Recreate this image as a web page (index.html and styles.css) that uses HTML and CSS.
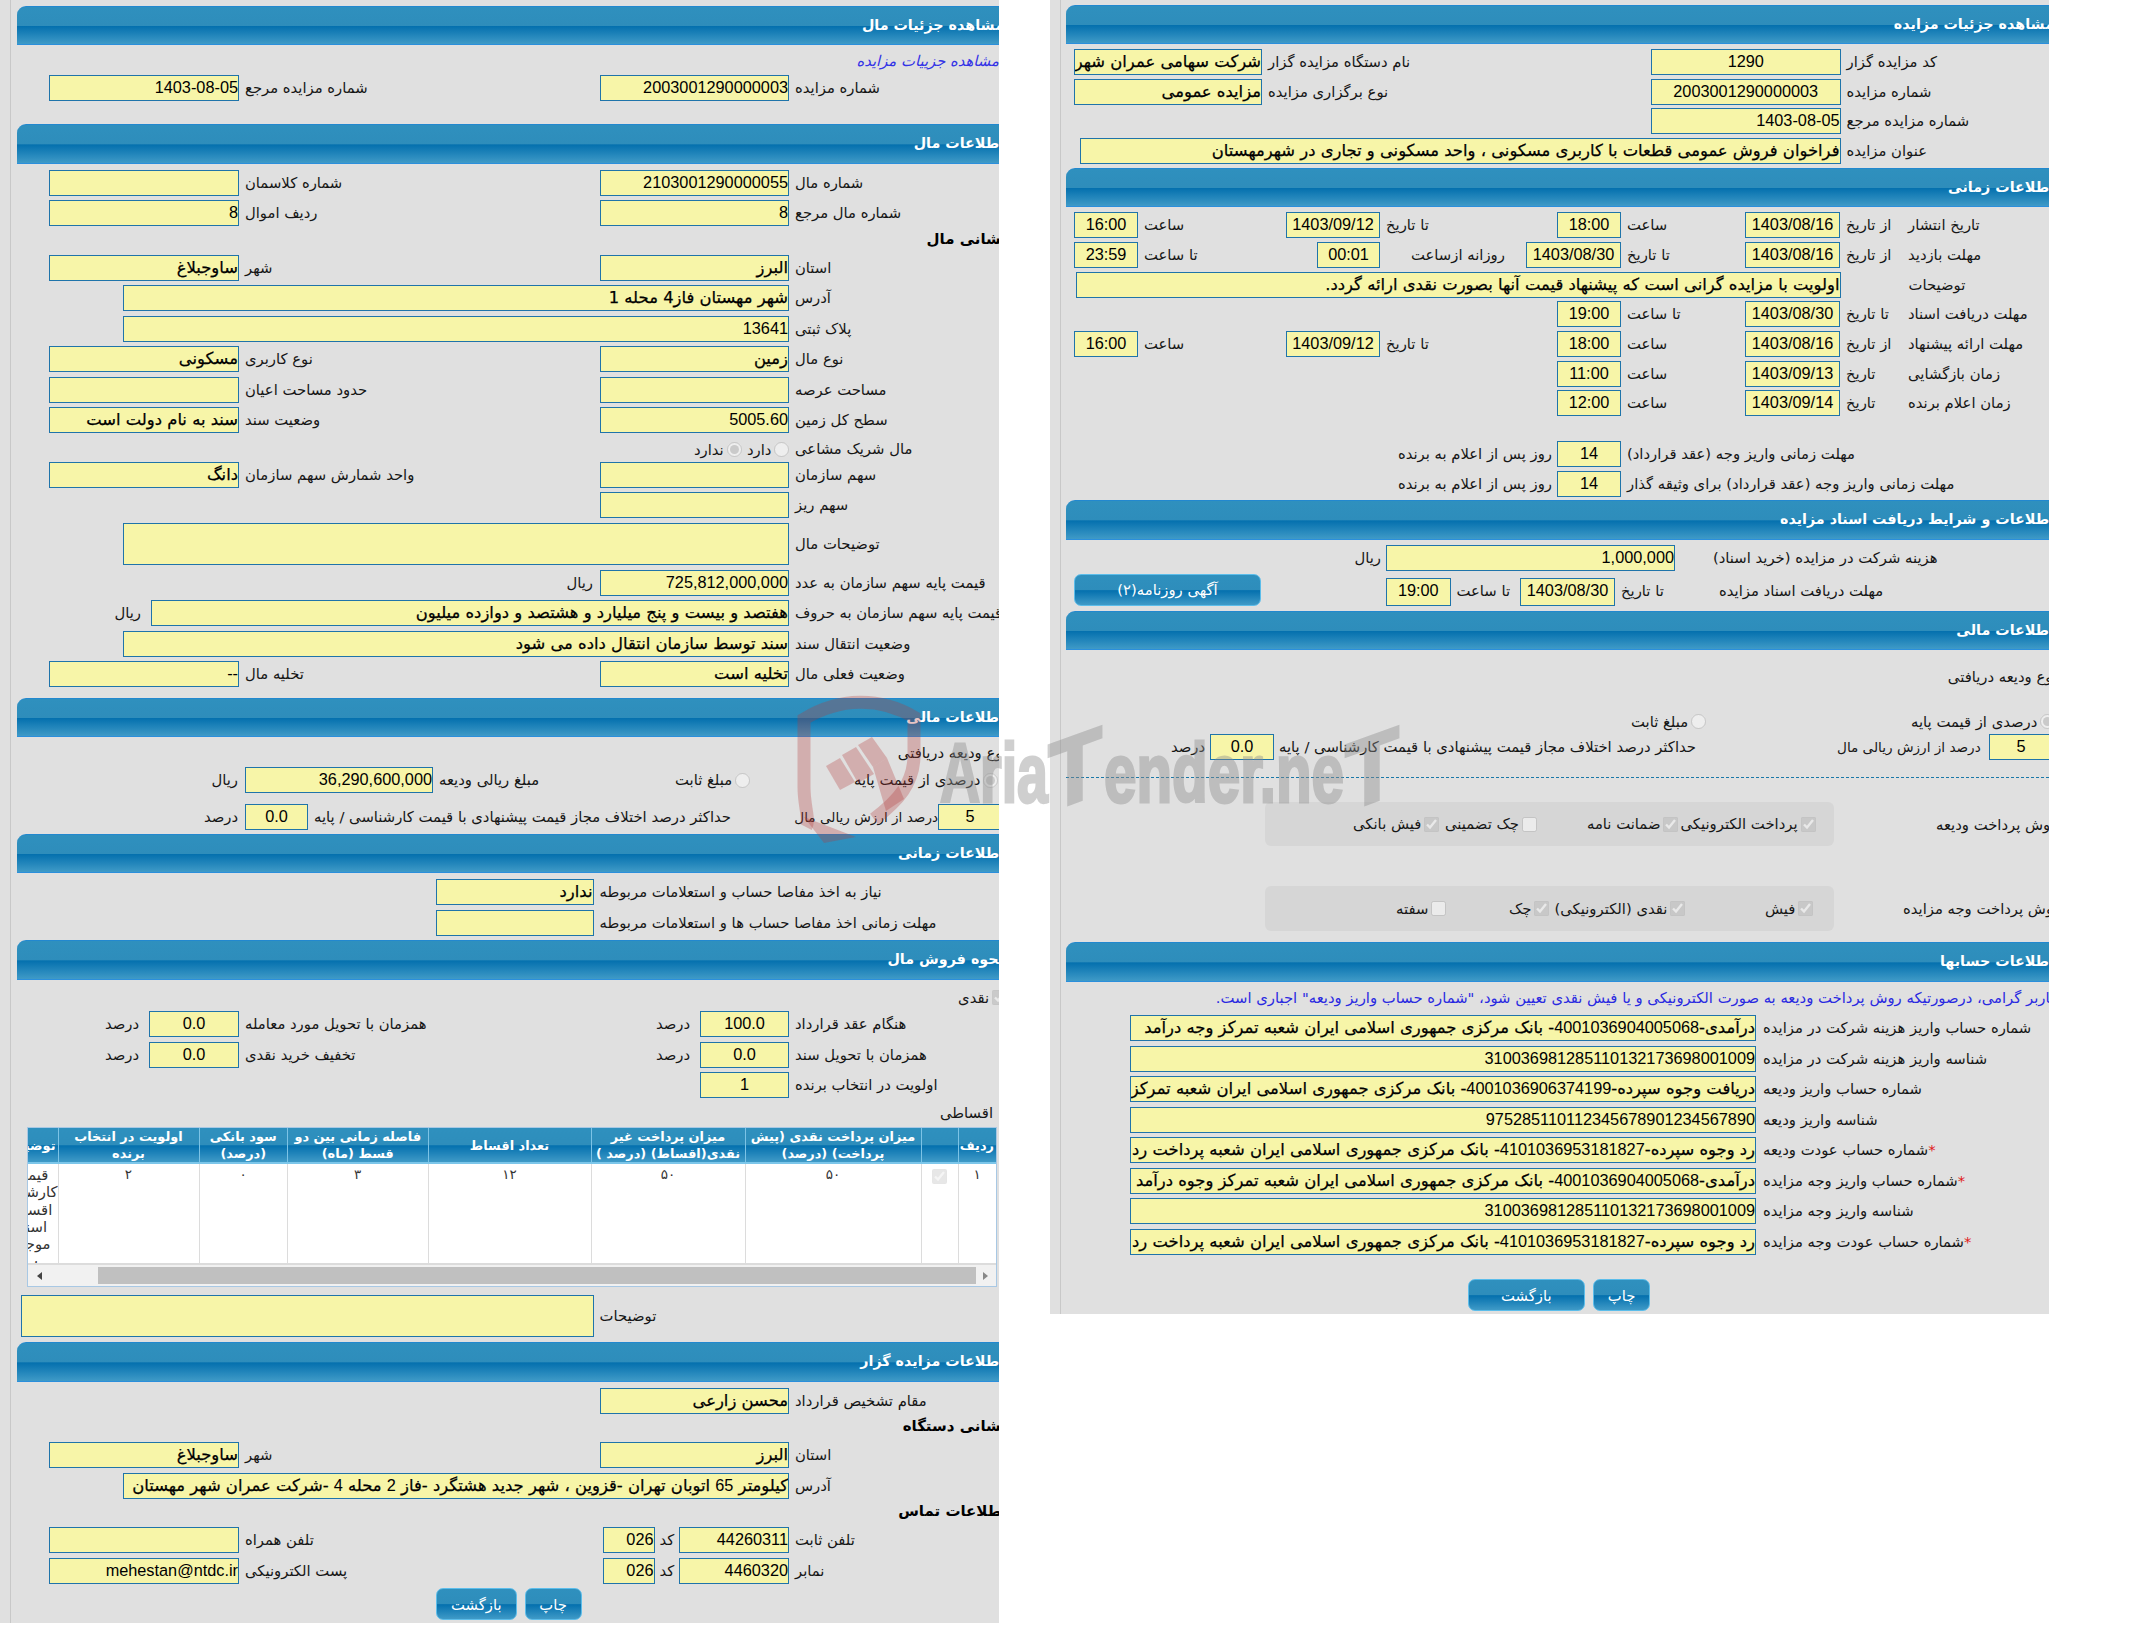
FILE: index.html
```html
<!DOCTYPE html>
<html lang="fa">
<head>
<meta charset="utf-8">
<title>مشاهده جزئیات مزایده</title>
<link rel="stylesheet" href="styles.css">
</head>
<body>
<div class="page">

<section class="panel left">
<div class="inner">
  <h2 class="bar">مشاهده جزئیات مال</h2>
  <div class="tr link">مشاهده جزییات مزایده</div>
  <div class="r a"><div class="in n">1403-08-05</div><div class="lb">شماره مزایده مرجع</div><div class="in n">2003001290000003</div><div class="lb">شماره مزایده</div></div>
  <h2 class="bar m24">اطلاعات مال</h2>
  <div class="r a"><div class="in"></div><div class="lb">شماره کلاسمان</div><div class="in n">2103001290000055</div><div class="lb">شماره مال</div></div>
  <div class="r a"><div class="in n">8</div><div class="lb">ردیف اموال</div><div class="in n">8</div><div class="lb">شماره مال مرجع</div></div>
  <div class="tr sub clip">نشانی مال</div>
  <div class="r a"><div class="in ar">ساوجبلاغ</div><div class="lb">شهر</div><div class="in ar">البرز</div><div class="lb">استان</div></div>
  <div class="r w"><div class="in ar">شهر مهستان فاز4 محله 1</div><div class="lb">آدرس</div></div>
  <div class="r w"><div class="in n">13641</div><div class="lb">پلاک ثبتی</div></div>
  <div class="r a"><div class="in ar">مسکونی</div><div class="lb">نوع کاربری</div><div class="in ar">زمین</div><div class="lb">نوع مال</div></div>
  <div class="r a"><div class="in"></div><div class="lb">حدود مساحت اعیان</div><div class="in"></div><div class="lb">مساحت عرصه</div></div>
  <div class="r a"><div class="in ar">سند به نام دولت است</div><div class="lb">وضعیت سند</div><div class="in n">5005.60</div><div class="lb">سطح کل زمین</div></div>
  <div class="tr shares"><label class="opt">ندارد<input type="radio" name="sh" disabled checked></label><label class="opt">دارد<input type="radio" name="sh" disabled></label><span class="lb">مال شریک مشاعی</span></div>
  <div class="r a"><div class="in ar">دانگ</div><div class="lb">واحد شمارش سهم سازمان</div><div class="in"></div><div class="lb">سهم سازمان</div></div>
  <div class="r a"><div class="c3 in"></div><div class="lb">سهم ریز</div></div>
  <div class="area w"><div class="in"></div><div class="lb">توضیحات مال</div></div>
  <div class="r p"><div class="unit">ریال</div><div class="in n">725,812,000,000</div><div class="lb">قیمت پایه سهم سازمان به عدد</div></div>
  <div class="r l"><div class="unit">ریال</div><div class="in ar">هفتصد و بیست و پنج میلیارد و هشتصد و دوازده میلیون</div><div class="lb">قیمت پایه سهم سازمان به حروف</div></div>
  <div class="r w"><div class="in ar">سند توسط سازمان انتقال داده می شود</div><div class="lb">وضعیت انتقال سند</div></div>
  <div class="r a"><div class="in n">--</div><div class="lb">تخلیه مال</div><div class="in ar">تخلیه است</div><div class="lb">وضعیت فعلی مال</div></div>
  <h2 class="bar m12">اطلاعات مالی</h2>
  <div class="tr rt clip">نوع ودیعه دریافتی</div>
  <div class="r f1"><div class="unit">ریال</div><div class="in n">36,290,600,000</div><div class="lb">مبلغ ریالی ودیعه</div><label class="opt">مبلغ ثابت<input type="radio" name="a1" disabled></label><label class="opt">درصدی از قیمت پایه<input type="radio" name="a1" disabled checked></label></div>
  <div class="r f2"><div class="unit">درصد</div><div class="in n ct">0.0</div><div class="lb">حداکثر درصد اختلاف مجاز قیمت پیشنهادی با قیمت کارشناسی / پایه</div><div class="lb tight">درصد از ارزش ریالی مال</div><div class="in n ct">5</div></div>
  <h2 class="bar m0">اطلاعات زمانی</h2>
  <div class="r t"><div class="in ar">ندارد</div><div class="lb">نیاز به اخذ مفاصا حساب و استعلامات مربوطه</div></div>
  <div class="r t"><div class="in"></div><div class="lb">مهلت زمانی اخذ مفاصا حساب ها و استعلامات مربوطه</div></div>
  <h2 class="bar m0">نحوه فروش مال</h2>
  <div class="tr rt check clip"><label class="opt">نقدی<input type="checkbox" disabled checked></label></div>
  <div class="r c"><div class="unit">درصد</div><div class="in n ct">0.0</div><div class="lb">همزمان با تحویل مورد معامله</div><div class="unit">درصد</div><div class="in n ct">100.0</div><div class="lb">هنگام عقد قرارداد</div></div>
  <div class="r c"><div class="unit">درصد</div><div class="in n ct">0.0</div><div class="lb">تخفیف خرید نقدی</div><div class="unit">درصد</div><div class="in n ct">0.0</div><div class="lb">همزمان با تحویل سند</div></div>
  <div class="r c"><div class="c5 in n ct">1</div><div class="lb">اولویت در انتخاب برنده</div></div>
  <div class="tr rt install">اقساطی</div>
  <div class="tablewrap">
    <div class="tablearea">
    <table>
      <thead><tr><th class="c1">ردیف</th><th class="c2"></th><th class="c3w">میزان پرداخت نقدی (پیش پرداخت) (درصد)</th><th class="c4">میزان پرداخت غیر نقدی(اقساط) (درصد )</th><th class="c5w">تعداد اقساط</th><th class="c6">فاصله زمانی بین دو قسط (ماه)</th><th class="c7">سود بانکی (درصد)</th><th class="c8">اولویت در انتخاب برنده</th><th class="c9">توضیحات</th></tr></thead>
      <tbody><tr><td>۱</td><td><input type="checkbox" disabled checked></td><td>۵۰</td><td>۵۰</td><td>۱۲</td><td>۳</td><td>۰</td><td>۲</td><td class="note">قیمت کارشناسی اقساط اسناد موجود ب</td></tr></tbody>
    </table>
    </div>
    <div class="hscroll"><span class="arr lt"></span><span class="thumb"></span><span class="arr rg"></span></div>
  </div>
  <div class="area d"><div class="in"></div><div class="lb">توضیحات</div></div>
  <h2 class="bar m0">اطلاعات مزایده گزار</h2>
  <div class="r a"><div class="c3 in ar">محسن زارعی</div><div class="lb">مقام تشخیص قرارداد</div></div>
  <div class="tr sub clip">نشانی دستگاه</div>
  <div class="r a"><div class="in ar">ساوجبلاغ</div><div class="lb">شهر</div><div class="in ar">البرز</div><div class="lb">استان</div></div>
  <div class="r w"><div class="in ar">کیلومتر <span class="n">65</span> اتوبان تهران -قزوین ، شهر جدید هشتگرد -فاز <span class="n">2</span> محله <span class="n">4</span> -شرکت عمران شهر مهستان</div><div class="lb">آدرس</div></div>
  <div class="tr sub clip">اطلاعات تماس</div>
  <div class="r ph"><div class="in"></div><div class="lb">تلفن همراه</div><div class="in n">026</div><div class="lb code">کد</div><div class="in n">44260311</div><div class="lb">تلفن ثابت</div></div>
  <div class="r ph"><div class="in n">mehestan@ntdc.ir</div><div class="lb">پست الکترونیکی</div><div class="in n">026</div><div class="lb code">کد</div><div class="in n">4460320</div><div class="lb">نمابر</div></div>
  <div class="btns lbtns"><button class="btn back">بازگشت</button><button class="btn print">چاپ</button></div>
</div>
</section>

<section class="panel right">
<div class="inner">
  <h2 class="bar">مشاهده جزئیات مزایده</h2>
  <div class="r a2"><div class="in ar">شرکت سهامی عمران شهر مهستان</div><div class="lb">نام دستگاه مزایده گزار</div><div class="in n ct">1290</div><div class="lb">کد مزایده گزار</div></div>
  <div class="r a2"><div class="in ar">مزایده عمومی</div><div class="lb">نوع برگزاری مزایده</div><div class="in n ct">2003001290000003</div><div class="lb">شماره مزایده</div></div>
  <div class="r a2"><div class="c3 in n">1403-08-05</div><div class="lb">شماره مزایده مرجع</div></div>
  <div class="r tt"><div class="in ar">فراخوان فروش عمومی قطعات با کاربری مسکونی ، واحد مسکونی و تجاری در شهرمهستان</div><div class="lb">عنوان مزایده</div></div>
  <h2 class="bar m0">اطلاعات زمانی</h2>
  <div class="r t1"><div class="in n ct">16:00</div><div class="lb">ساعت</div><div class="in n ct">1403/09/12</div><div class="lb">تا تاریخ</div><div class="in n ct">18:00</div><div class="lb">ساعت</div><div class="in n ct">1403/08/16</div><div class="lb">از تاریخ</div><div class="lb">تاریخ انتشار</div></div>
  <div class="r t2"><div class="in n ct">23:59</div><div class="lb">تا ساعت</div><div class="in n ct">00:01</div><div class="lb far">روزانه ازساعت</div><div class="in n ct">1403/08/30</div><div class="lb">تا تاریخ</div><div class="in n ct">1403/08/16</div><div class="lb">از تاریخ</div><div class="lb">مهلت بازدید</div></div>
  <div class="r t3"><div class="in ar">اولویت با مزایده گرانی است که پیشنهاد قیمت آنها بصورت نقدی ارائه گردد.</div><div class="lb c3">توضیحات</div></div>
  <div class="r t1"><div class="c5 in n ct">19:00</div><div class="lb">تا ساعت</div><div class="in n ct">1403/08/30</div><div class="lb">تا تاریخ</div><div class="lb">مهلت دریافت اسناد</div></div>
  <div class="r t1"><div class="in n ct">16:00</div><div class="lb">ساعت</div><div class="in n ct">1403/09/12</div><div class="lb">تا تاریخ</div><div class="in n ct">18:00</div><div class="lb">ساعت</div><div class="in n ct">1403/08/16</div><div class="lb">از تاریخ</div><div class="lb">مهلت ارائه پیشنهاد</div></div>
  <div class="r t1"><div class="c5 in n ct">11:00</div><div class="lb">ساعت</div><div class="in n ct">1403/09/13</div><div class="lb">تاریخ</div><div class="lb">زمان بازگشایی</div></div>
  <div class="r t1"><div class="c5 in n ct">12:00</div><div class="lb">ساعت</div><div class="in n ct">1403/09/14</div><div class="lb">تاریخ</div><div class="lb">زمان اعلام برنده</div></div>
  <div class="r dl first"><div class="unit">روز پس از اعلام به برنده</div><div class="in n ct">14</div><div class="lb">مهلت زمانی واریز وجه (عقد قرارداد)</div></div>
  <div class="r dl"><div class="unit">روز پس از اعلام به برنده</div><div class="in n ct">14</div><div class="lb">مهلت زمانی واریز وجه (عقد قرارداد) برای وثیقه گذار</div></div>
  <h2 class="bar m0">اطلاعات و شرایط دریافت اسناد مزایده</h2>
  <div class="r cost"><div class="unit">ریال</div><div class="in n">1,000,000</div><div class="lb">هزینه شرکت در مزایده (خرید اسناد)</div></div>
  <div class="r doc"><button class="btn news">آگهی روزنامه(۲)</button><div class="in n ct c3">19:00</div><div class="lb">تا ساعت</div><div class="in n ct">1403/08/30</div><div class="lb">تا تاریخ</div><div class="lb">مهلت دریافت اسناد مزایده</div></div>
  <h2 class="bar m0">اطلاعات مالی</h2>
  <div class="tr rt clip kind">نوع ودیعه دریافتی</div>
  <div class="r radios"><label class="opt c2">مبلغ ثابت<input type="radio" name="a2" disabled></label><label class="opt">درصدی از قیمت پایه<input type="radio" name="a2" disabled checked></label></div>
  <div class="r f3"><div class="unit">درصد</div><div class="in n ct">0.0</div><div class="lb">حداکثر درصد اختلاف مجاز قیمت پیشنهادی با قیمت کارشناسی / پایه</div><div class="lb tight">درصد از ارزش ریالی مال</div><div class="in n ct">5</div></div>
  <div class="dots"></div>
  <div class="method m-a">
    <div class="box box1">
      <label class="opt">فیش بانکی<input type="checkbox" disabled checked></label>
      <label class="opt">چک تضمینی<input type="checkbox" disabled></label>
      <label class="opt">ضمانت نامه<input type="checkbox" disabled checked></label>
      <label class="opt">پرداخت الکترونیکی<input type="checkbox" disabled checked></label>
    </div>
    <div class="mname">روش پرداخت ودیعه</div>
  </div>
  <div class="method m-b">
    <div class="box box2">
      <label class="opt">سفته<input type="checkbox" disabled></label>
      <label class="opt">چک<input type="checkbox" disabled checked></label>
      <label class="opt">نقدی (الکترونیکی)<input type="checkbox" disabled checked></label>
      <label class="opt">فیش<input type="checkbox" disabled checked></label>
    </div>
    <div class="mname">روش پرداخت وجه مزایده</div>
  </div>
  <h2 class="bar m11">اطلاعات حسابها</h2>
  <div class="tr note-blue clip">کاربر گرامی، درصورتیکه روش پرداخت ودیعه به صورت الکترونیکی و یا فیش نقدی تعیین شود، "شماره حساب واریز ودیعه" اجباری است.</div>
  <div class="r acc"><div class="in ar">درآمدی-<span class="n">4001036904005068</span>- بانک مرکزی جمهوری اسلامی ایران شعبه تمرکز وجه درآمد</div><div class="lb">شماره حساب واریز هزینه شرکت در مزایده</div></div>
  <div class="r acc"><div class="in n">310036981285110132173698001009</div><div class="lb">شناسه واریز هزینه شرکت در مزایده</div></div>
  <div class="r acc"><div class="in ar">دریافت وجوه سپرده-<span class="n">4001036906374199</span>- بانک مرکزی جمهوری اسلامی ایران شعبه تمرکز</div><div class="lb">شماره حساب واریز ودیعه</div></div>
  <div class="r acc"><div class="in n">975285110112345678901234567890</div><div class="lb">شناسه واریز ودیعه</div></div>
  <div class="r acc"><div class="in ar">رد وجوه سپرده-<span class="n">4101036953181827</span>- بانک مرکزی جمهوری اسلامی ایران شعبه پرداخت رد</div><div class="lb"><b class="req">*</b>شماره حساب عودت ودیعه</div></div>
  <div class="r acc"><div class="in ar">درآمدی-<span class="n">4001036904005068</span>- بانک مرکزی جمهوری اسلامی ایران شعبه تمرکز وجوه درآمد</div><div class="lb"><b class="req">*</b>شماره حساب واریز وجه مزایده</div></div>
  <div class="r acc"><div class="in n">310036981285110132173698001009</div><div class="lb">شناسه واریز وجه مزایده</div></div>
  <div class="r acc"><div class="in ar">رد وجوه سپرده-<span class="n">4101036953181827</span>- بانک مرکزی جمهوری اسلامی ایران شعبه پرداخت رد</div><div class="lb"><b class="req">*</b>شماره حساب عودت وجه مزایده</div></div>
  <div class="btns rbtns"><button class="btn back">بازگشت</button><button class="btn print">چاپ</button></div>
</div>
</section>

<svg class="mark" width="620" height="160" viewBox="0 0 620 160" aria-hidden="true">
  <g fill="none" stroke="#b43c3c" stroke-opacity=".3" stroke-width="13">
    <path d="M16 132 C 20 124 14 112 14 92 L 14 24 C 50 2 90 2 124 22 L 124 60 C 124 88 108 106 84 124"/>
  </g>
  <g fill="#b43c3c" fill-opacity=".3">
    <path d="M36 71 L50 63 L65 87 L50 95 Z"/>
    <path d="M52 60 L66 52 L84 79 L68 88 Z"/>
    <path d="M68 50 L82 42 L97 63 L83 72 Z"/>
    <path d="M14 122 L66 142 L34 148 Z"/>
    <path d="M83 72 L97 63 L114 104 L96 116 Z"/>
  </g>
  <g class="wm">
    <text x="150" y="107" textLength="108" lengthAdjust="spacingAndGlyphs" class="w1">Aria</text>
    <text x="0" y="0" textLength="54" lengthAdjust="spacingAndGlyphs" class="w2" transform="translate(258 117) skewY(-20)">T</text>
    <text x="314" y="107" textLength="240" lengthAdjust="spacingAndGlyphs" class="w1">ender.ne</text>
    <text x="0" y="0" textLength="54" lengthAdjust="spacingAndGlyphs" class="w2" transform="translate(555 117) skewY(-20)">T</text>
  </g>
</svg>
</div>
</body>
</html>
```
FILE: styles.css
```css
*{box-sizing:border-box}
html,body{margin:0;padding:0;background:#fff}
body{font-family:"DejaVu Sans",sans-serif;font-size:14.8px;color:#161616;width:2150px;height:1625px;overflow:hidden}
.page{display:flex;align-items:flex-start;gap:51px;position:relative;width:2150px}
.panel{flex:none;width:999px;background:#e0e0e0;padding-left:10px;overflow:hidden}
.inner{border-left:1px solid #c8c8c8}
.left .inner{height:1623px;padding-top:6px}
.right .inner{height:1314px;padding-top:5px}

.bar{margin:0 0 6px;height:39.5px;direction:rtl;font-size:14.3px;font-weight:bold;color:#fff;line-height:36px;white-space:nowrap;
 background:linear-gradient(#2f90be 0,#2e8dbb 50%,#0470ae 52%,#3f9ac7 100%);border-top:1px solid #2288cf;border-bottom:1px solid #2b8fdc;border-top-left-radius:9px;text-indent:-5px}
.left .bar{margin-left:6px}
.right .bar{margin-left:5px;margin-bottom:5px}
.left .bar:first-child,.right .bar:first-child{height:39px}
.m24{margin-top:24.5px}
.m12{margin-top:12px}
.m11{margin-top:11px}
.bar.m0{margin-top:0}

.r{display:grid;height:24.5px;margin-bottom:6px;align-items:stretch;width:1100px}
.right .r{margin-bottom:5.2px}
.tr{height:24px;line-height:20px;direction:rtl;white-space:nowrap}
.clip{margin-right:-8px}
.link{color:#3333e6;font-style:italic}
.sub{font-weight:bold;color:#000;font-size:15px;line-height:17px}
.rt{color:#161616}

.in{border:1px solid #1f74aa;background:#f7f5a8;height:100%;direction:rtl;text-align:right;white-space:nowrap;overflow:hidden;color:#000;line-height:23px}
.n{font-family:"Liberation Sans","DejaVu Sans",sans-serif;font-size:16.3px}
.ar{font-size:16.4px;-webkit-text-stroke:.25px #000;line-height:23px}
.ar .n{-webkit-text-stroke:0}
.ct{text-align:center}
.lb{direction:rtl;text-align:left;padding-left:6px;white-space:nowrap;line-height:26px}
.tight{padding-left:0;font-size:13.6px}
.unit{direction:rtl;text-align:right;padding-right:7px;white-space:nowrap;line-height:26px}
.req{color:#e01818;font-weight:normal}
.far{padding-left:31px}

.opt{display:inline-flex;direction:rtl;flex-direction:row-reverse;justify-content:flex-start;align-items:center;gap:3px;white-space:nowrap;line-height:24px}
.opt input{margin:0;width:15px;height:15px;flex:none}

.c2{grid-column:2}
.c3{grid-column:3}
.c5{grid-column:5}

/* left panel columns */
.a{grid-template-columns:190px 361px 189px 300px;padding-left:38px}
.w{grid-template-columns:666px 300px;padding-left:112px}
.p{grid-template-columns:589px 189px 300px}
.l{grid-template-columns:140px 638px 300px}
.l .unit{padding-right:10px}
.area{display:grid;margin-bottom:9px;height:38px;width:1100px}
.area .lb{line-height:42px}
.d{grid-template-columns:572.5px 300px;padding-left:10px}
.f1{grid-template-columns:234px 188px 242px 179px 200px}
.f2{grid-template-columns:234px 63px 491px 139px 64px}
.left .f1{margin-bottom:12px}
.left .f2{margin-bottom:5.5px}
.t{grid-template-columns:157.5px 500px;padding-left:425px}
.c{grid-template-columns:138px 90px 421px 40px 89px 300px}
.c .unit{padding-right:10px}
.ph{grid-template-columns:190px 364px 51.5px 24.5px 110px 300px;padding-left:38px}
.ph .code{padding-left:5px}
.shares{display:grid;grid-template-columns:53px 48px 300px;padding-left:683px;direction:ltr;width:1100px}
.shares .lb{line-height:22px;padding-left:0}
.check{height:25.5px}
.install{height:24.5px;text-indent:6px}

.tablewrap{width:970.5px;margin-left:15.5px;height:160px;border:1px solid #a8c8e4;background:#fff;margin-bottom:8px;overflow:hidden}
.tablearea{direction:rtl;height:137px;overflow:hidden;border-bottom:2px solid #dcdcdc}
table{border-collapse:collapse;table-layout:fixed;width:992px;direction:rtl}
th{height:35px;padding:0 2px;font-size:12.9px;line-height:17px;font-weight:bold;color:#fff;background:linear-gradient(#2f90be 0,#2e8dbb 50%,#0470ae 52%,#3f9ac7 100%);border-left:1px solid #7cc3e6;border-bottom:2px solid #7cc6ea;overflow:hidden;white-space:normal}
td{vertical-align:top;text-align:center;font-size:13.5px;color:#333;height:101px;line-height:17.3px;padding:2px 0 0;border-left:1px solid #dcdcdc;overflow:hidden}
td input{margin:3px 0 0;width:15px;height:15px;opacity:.55}
.c1{width:38px}.c3w{width:176px}.c4{width:154px}.c5w{width:163px}.c6{width:140.5px}.c7{width:88.5px}.c8{width:141px}
th.c2{width:37px;grid-column:auto}
.c9{width:54px}
td.note{width:54px;font-size:14.8px;word-spacing:100px}
.hscroll{display:flex;align-items:center;height:21px;background:#f1f1f1;position:relative}
.thumb{display:block;width:878px;height:17px;background:#c0c0c0;margin-left:56px;margin-right:auto}
.arr{display:block;width:0;height:0;border-top:4.5px solid transparent;border-bottom:4.5px solid transparent}
.lt{border-right:5px solid #444;margin-left:9px}
.rg{border-left:5px solid #888;margin-right:8px}

.btns{display:flex;height:32px}
.lbtns{margin-top:2px;padding-left:425px;gap:8px}
.rbtns{margin-top:26px;padding-left:406.5px;gap:8px}
.btn{font-family:"DejaVu Sans",sans-serif;font-size:14.8px;color:#fff;height:32px;padding:0;border:1px solid #5cbdea;border-radius:7px;background:linear-gradient(#2f90be 0,#2e8dbb 50%,#0470ae 52%,#3f9ac7 100%)}
.left .back{width:80.5px}.left .print{width:57px}
.right .back{width:117.5px}.right .print{width:57px}
.news{height:32px;margin-top:-4px}

/* right panel columns */
.a2{grid-template-columns:188px 389px 189.5px 300px;padding-left:13px}
.tt{grid-template-columns:760.5px 300px;padding-left:19px}
.t1{grid-template-columns:64px 148px 94px 177px 64px 124px 95px 62px 300px;padding-left:13px}
.t2{grid-template-columns:64px 179px 63px 146px 95px 124px 95px 62px 300px;padding-left:13px}
.t3{grid-template-columns:764.5px 62px 300px;padding-left:15px}
.dl{grid-template-columns:496px 64px 400px}
.dl .unit{padding-right:5px}
.first{margin-top:26px}
.cost{grid-template-columns:325px 289px 400px}
.cost .unit{padding-right:5px}
.cost .lb{padding-left:38px}
.right .cost{margin-bottom:8.5px}
.doc{grid-template-columns:187px 125px 64.5px 69.5px 95px 98px 300px;padding-left:13px}
.right .doc{margin-bottom:8.5px}
.doc .in.c3{grid-column:3}
.doc .btn{grid-column:1}
.kind{height:42px;line-height:44px}
.radios{grid-template-columns:570px 280px 200px;height:25px;margin-top:12px}
.right .radios{margin-bottom:0}
.radios .opt{align-self:center}
.f3{grid-template-columns:149px 64px 563px 152px 64px}
.f3 .unit{padding-right:5px}
.f3 .lb{padding-left:5px}
.f3 .lb.tight{padding-left:0}
.dots{margin:18.5px 0 0 5px;border-top:1px dashed #1a78a8;height:1px}
.method{display:flex;align-items:center;width:1100px}
.m-a{margin-top:24px;height:44px;padding-left:204px}
.m-b{margin-top:40px;height:45px;padding-left:204px}
.box{flex:none;width:569px;height:100%;background:#d6d6d6;border-radius:6px;display:grid;align-items:center}
.box1{grid-template-columns:92px 142px 93.5px 130px;padding-left:88px}
.box2{grid-template-columns:113px 45.5px 210.5px 50px;padding-left:131px}
.mname{direction:rtl;text-align:left;padding-left:102px;white-space:nowrap;width:400px;flex:none}
.m-b .mname{padding-left:69px}
.note-blue{color:#2a2ae0;height:28.5px;line-height:21px}
.acc{grid-template-columns:626px 400px;padding-left:69px}
.right .acc{margin-bottom:6px}
.acc .lb{padding-left:7px}

/* watermark over both panels */
.mark{position:absolute;left:790px;top:695px;pointer-events:none}
.wm{opacity:.42}
.wm text{font-family:"Liberation Sans",sans-serif;font-weight:bold;fill:#8e8e8e;stroke:#8e8e8e;stroke-width:3px}
.w1{font-size:84px}
.w2{font-size:96px}
```
